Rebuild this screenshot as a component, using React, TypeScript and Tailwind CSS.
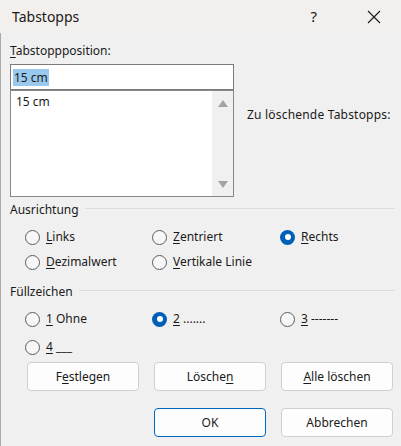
import React from "react";

const U = ({ children }: { children: React.ReactNode }) => (
  <span className="underline underline-offset-[2px] decoration-[1px]">{children}</span>
);

const Radio = ({ checked, children }: { checked?: boolean; children: React.ReactNode }) => (
  <div className="flex items-center h-[20px]">
    {checked ? (
      <span className="w-[15px] h-[15px] rounded-full bg-[#005fb8] flex items-center justify-center shrink-0">
        <span className="w-[6px] h-[6px] rounded-full bg-white" />
      </span>
    ) : (
      <span className="w-[15px] h-[15px] rounded-full border border-[#5d5d5d] bg-[#f7f7f7] shrink-0" />
    )}
    <span className="ml-[6px] whitespace-pre">{children}</span>
  </div>
);

const Btn = ({ children, primary }: { children: React.ReactNode; primary?: boolean }) => (
  <div
    className={
      "w-[112px] h-[29px] rounded-[4px] bg-[#fdfdfd] flex items-center justify-center shrink-0 " +
      (primary ? "border border-[#0067c0]" : "border border-[#d0d0d0]")
    }
  >
    {children}
  </div>
);

export default function App() {
  return (
    <div
      className="w-[401px] h-[446px] bg-[#f0f0f0] text-[12px] text-[#1a1a1a] overflow-hidden relative"
      style={{ fontFamily: '"Noto Sans", "Open Sans", sans-serif' }}
    >
      {/* Title bar */}
      <div className="h-[33px] bg-[#f3efec] flex items-center">
        <span className="ml-[12px] text-[14px] text-[#1a1a1a]">Tabstopps</span>
        <span className="ml-auto text-[15px] mr-[50px]">?</span>
        <svg width="14" height="14" viewBox="0 0 14 14" className="mr-[20px]">
          <path d="M1 1 L13 13 M13 1 L1 13" stroke="#1a1a1a" strokeWidth="1.1" fill="none" />
        </svg>
      </div>

      <div className="border-l border-[#a9a9a9] h-[413px] pl-[9px] pr-[6px]">
        <div className="pt-[10px] h-[31px] leading-[16px]">
          <U>T</U>abstoppposition:
        </div>
        <div className="w-[224px] h-[26px] border border-[#7a7a7a] bg-white flex items-center pl-[2px]">
          <span className="bg-[#99c9ef] px-[1px] leading-[17px]">15 cm</span>
        </div>
        <div className="flex">
          <div className="w-[224px] h-[107px] shrink-0 border border-[#828790] bg-white flex">
            <div className="flex-1 pl-[5px] pt-[2px] leading-[18px]">15 cm</div>
            <div className="w-[21px] bg-[#f0f0f0] flex flex-col items-center justify-between pt-[9px] pb-[8px]">
              <svg width="10" height="7" viewBox="0 0 10 7"><path d="M0 7 L5 0 L10 7 Z" fill="#a3a3a3" /></svg>
              <svg width="10" height="7" viewBox="0 0 10 7"><path d="M0 0 L5 7 L10 0 Z" fill="#a3a3a3" /></svg>
            </div>
          </div>
          <div className="ml-[13px] pt-[17px] leading-[16px] tracking-[0.2px] whitespace-nowrap">Zu löschende Tabstopps:</div>
        </div>

        {/* Ausrichtung */}
        <div className="flex items-center mt-[5px] h-[16px]">
          <span>Ausrichtung</span>
          <div className="flex-1 h-px bg-[#dcdcdc] ml-[6px] mt-[-3px]" />
        </div>
        <div className="grid grid-cols-[127px_128px_1fr] pl-[15px] mt-[9px] gap-y-[5px]">
          <Radio><U>L</U>inks</Radio>
          <Radio><U>Z</U>entriert</Radio>
          <Radio checked><U>R</U>echts</Radio>
          <Radio><U>D</U>ezimalwert</Radio>
          <Radio><U>V</U>ertikale Linie</Radio>
        </div>

        {/* Füllzeichen */}
        <div className="flex items-center mt-[12px] h-[16px]">
          <span>Füllzeichen</span>
          <div className="flex-1 h-px bg-[#dcdcdc] ml-[6px] mt-[-3px]" />
        </div>
        <div className="grid grid-cols-[127px_128px_1fr] pl-[15px] mt-[9px] gap-y-[8px]">
          <Radio><U>1</U> Ohne</Radio>
          <Radio checked><U>2</U> .......</Radio>
          <Radio><U>3</U> -------</Radio>
          <Radio><U>4</U> ___</Radio>
        </div>

        <div className="flex gap-[15px] pl-[17px] mt-[5px]">
          <Btn>F<U>e</U>stlegen</Btn>
          <Btn>Lösche<U>n</U></Btn>
          <Btn><U>A</U>lle löschen</Btn>
        </div>
        <div className="flex gap-[15px] pl-[144px] mt-[17px]">
          <Btn primary>OK</Btn>
          <Btn>Abbrechen</Btn>
        </div>
      </div>
    </div>
  );
}
